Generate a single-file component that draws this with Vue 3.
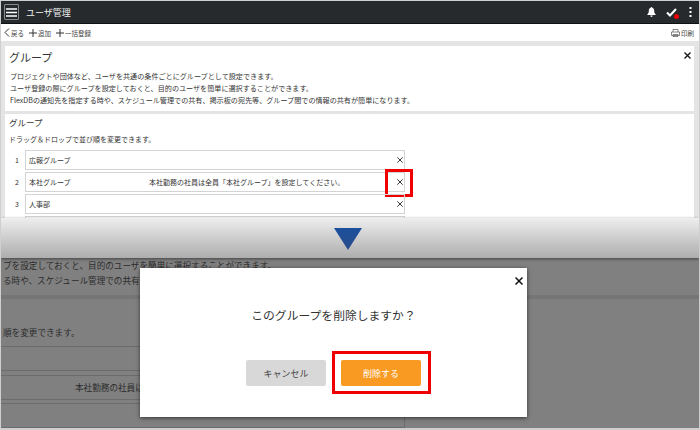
<template>
  <div class="page">
    <!-- before: group list -->
    <section class="top">
      <header class="appbar">
        <button class="menu">
          <svg width="11" height="9" viewBox="0 0 11 9"><path d="M0 1h11M0 4.500h11M0 8h11" stroke="#fff" stroke-width="1.500" /></svg>
        </button>
        <span class="app-title">ユーザ管理</span>
        <div class="appbar-icons">
          <svg width="9" height="10" viewBox="0 0 9 10"><path d="M4.500 0c.5 0 .8.3.8.8C6.800 1.200 7.200 2.500 7.200 4c0 1.800.6 2.600 1.500 3.400V8H.3v-.6C1.200 6.600 1.800 5.800 1.800 4c0-1.500.4-2.800 1.900-3.200 0-.5.3-.8.8-.8zM3.300 8.600h2.400C5.700 9.400 5.200 10 4.500 10S3.300 9.400 3.300 8.600z" fill="#fff" /></svg>
          <span class="check">
            <svg width="11" height="9" viewBox="0 0 11 9"><path d="M1 4.500l3 3L10 1" fill="none" stroke="#fff" stroke-width="2" /></svg>
            <i class="dot"></i>
          </span>
          <svg class="more" width="3" height="10" viewBox="0 0 3 10"><path d="M.5 0h2v2h-2zM.5 4h2v2h-2zM.5 8h2v2h-2z" fill="#fff" /></svg>
        </div>
      </header>

      <nav class="toolbar">
        <a class="tool">
          <svg width="6" height="9" viewBox="0 0 6 9"><path d="M5 .5L1 4.500l4 4" fill="none" stroke="#333" stroke-width="1" /></svg>
          戻る
        </a>
        <a class="tool">
          <svg width="8" height="8" viewBox="0 0 8 8"><path d="M4 0v8M0 4h8" stroke="#333" stroke-width="1" /></svg>
          追加
        </a>
        <a class="tool">
          <svg width="8" height="8" viewBox="0 0 8 8"><path d="M4 0v8M0 4h8" stroke="#333" stroke-width="1" /></svg>
          一括登録
        </a>
        <a class="tool print">
          <svg width="9" height="8" viewBox="0 0 9 8"><path d="M2 3V.5h5V3M.5 3h8v3.500H.5zM2 5.500h5v2H2z" fill="#fff" stroke="#666" stroke-width=".8" /></svg>
          印刷
        </a>
      </nav>

      <div class="card intro">
        <h1>グループ</h1>
        <svg class="close" width="7" height="7" viewBox="0 0 7 7"><path d="M.5.5l6 6M6.500.5l-6 6" stroke="#111" stroke-width="1.300" /></svg>
        <p v-for="line in introLines" :key="line">{{ line }}</p>
      </div>

      <div class="card list">
        <h2>グループ</h2>
        <p class="hint">ドラッグ＆ドロップで並び順を変更できます。</p>
        <div class="rows">
          <div v-for="(g, i) in groups" :key="i" class="row">
            <span class="num">{{ g.name ? i + 1 : '' }}</span>
            <div class="field">
              <span class="name">{{ g.name }}</span>
              <span class="note">{{ g.note }}</span>
              <svg class="x" width="6" height="6" viewBox="0 0 6 6"><path d="M.3.3l5.400 5.400M5.700.3L.3 5.700" stroke="#222" stroke-width=".9" /></svg>
              <i v-if="g.note" class="mark mark-x"></i>
            </div>
          </div>
        </div>
      </div>
    </section>

    <!-- arrow band -->
    <div class="band">
      <svg width="28" height="22" viewBox="0 0 28 22">
        <defs>
          <linearGradient id="tri" x1="0" y1="0" x2="0" y2="1">
            <stop offset="0" stop-color="#1b4f9c" />
            <stop offset="1" stop-color="#2b4e8a" />
          </linearGradient>
        </defs>
        <path d="M0 0h28L14 22z" fill="url(#tri)" />
      </svg>
    </div>

    <!-- after: confirm dialog -->
    <section class="bottom">
      <p class="dim-line">プを設定しておくと、目的のユーザを簡単に選択することができます。</p>
      <p class="dim-line">る時や、スケジュール管理での共有、掲示板の宛先等、グループ間での情報の共有が簡単になります。</p>
      <div class="dim-gap"></div>
      <p class="dim-line l3">順を変更できます。</p>
      <div class="dim-rows">
        <div class="dim-row"></div>
        <div class="dim-row"><span>本社勤務の社員は全員「本社グループ」を設定してください。</span></div>
        <div class="dim-row"></div>
      </div>

      <div class="modal">
        <svg class="modal-close" width="8" height="8" viewBox="0 0 8 8"><path d="M.5.5l7 7M7.500.5l-7 7" stroke="#111" stroke-width="1.500" /></svg>
        <p class="question">このグループを削除しますか？</p>
        <div class="actions">
          <button class="btn cancel">キャンセル</button>
          <button class="btn danger">削除する<i class="mark mark-del"></i></button>
        </div>
      </div>
    </section>
  </div>
</template>

<script setup>
const introLines = [
  'プロジェクトや団体など、ユーザを共通の条件ごとにグループとして設定できます。',
  'ユーザ登録の際にグループを設定しておくと、目的のユーザを簡単に選択することができます。',
  'FlexDBの通知先を指定する時や、スケジュール管理での共有、掲示板の宛先等、グループ間での情報の共有が簡単になります。'
]

const groups = [
  { name: '広報グループ', note: '' },
  { name: '本社グループ', note: '本社勤務の社員は全員「本社グループ」を設定してください。' },
  { name: '人事部', note: '' },
  { name: '', note: '' }
]
</script>

<style>
html, body {
  margin: 0;
  background: #fff;
}
</style>

<style scoped>
.page {
  width: 700px;
  height: 430px;
  box-sizing: border-box;
  border: 1px solid #cfcfcf;
  border-bottom-width: 2px;
  overflow: hidden;
  display: flex;
  flex-direction: column;
  font-family: "Noto Sans CJK JP", "Liberation Sans", sans-serif;
  color: #333;
}

p, h1, h2 {
  margin: 0;
  font-weight: 400;
}

/* top half */
.top {
  height: 217px;
  flex: none;
  overflow: hidden;
  background: #e4e4e4;
}

.appbar {
  height: 23px;
  background: #262a2c;
  display: flex;
  align-items: center;
  padding: 0 7px 0 3px;
  box-sizing: border-box;
  border-bottom: 1px solid #111;
}

.menu {
  width: 15px;
  height: 16px;
  padding: 0;
  display: flex;
  align-items: center;
  justify-content: center;
  background: transparent;
  border: 1px solid #888;
  border-radius: 1px;
}

.app-title {
  margin-left: 7px;
  font-size: 9px;
  color: #f0f0f0;
}

.appbar-icons {
  margin-left: auto;
  display: flex;
  align-items: center;
  gap: 10px;
}

.more {
  margin-left: 2px;
}

.check {
  position: relative;
  display: flex;
}

.dot {
  position: absolute;
  right: -2px;
  bottom: -2px;
  width: 5px;
  height: 5px;
  border-radius: 50%;
  background: #f00000;
}

.toolbar {
  height: 17px;
  background: #fff;
  display: flex;
  align-items: center;
  gap: 5px;
  padding: 0 5px 0 3px;
  font-size: 6.500px;
}

.tool {
  display: flex;
  align-items: center;
  gap: 1px;
  color: #444;
}

.print {
  margin-left: auto;
}

.card {
  background: #fff;
  margin: 0 5px 0 4px;
  padding: 0 4px;
  position: relative;
}

.intro {
  margin-top: 5px;
  height: 65px;
  box-sizing: border-box;
  padding-top: 3px;
}

.intro h1 {
  font-size: 11px;
  line-height: 16px;
  margin-bottom: 5px;
}

.intro p {
  font-size: 7.100px;
  line-height: 12px;
  padding-left: 1px;
  white-space: nowrap;
}

.close {
  position: absolute;
  right: 3px;
  top: 6px;
}

.list {
  margin-top: 3px;
  padding-top: 2px;
  height: 120px;
}

.list h2 {
  font-size: 8.500px;
  line-height: 13px;
  margin-bottom: 5px;
}

.hint {
  font-size: 7px;
  line-height: 11px;
  margin-bottom: 5px;
}

.rows {
  display: flex;
  flex-direction: column;
  gap: 2px;
}

.row {
  display: flex;
  align-items: center;
}

.num {
  width: 16px;
  text-align: center;
  font-size: 7px;
  flex: none;
}

.field {
  position: relative;
  width: 380px;
  height: 20px;
  box-sizing: border-box;
  border: 1px solid #d4d4d4;
  display: flex;
  align-items: center;
  padding: 0 3px;
  font-size: 7px;
}

.name {
  width: 120px;
  flex: none;
}

.x {
  margin-left: auto;
  margin-right: -2px;
}

/* red highlight boxes */
.mark {
  position: absolute;
  box-sizing: border-box;
  border: 3px solid #f00000;
  display: block;
}

.mark-x {
  right: -9px;
  top: -4px;
  width: 28px;
  height: 28px;
}

/* arrow band */
.band {
  height: 40px;
  flex: none;
  display: flex;
  justify-content: center;
  align-items: flex-start;
  padding-top: 10px;
  padding-right: 4px;
  box-sizing: border-box;
  background: linear-gradient(#eeeeee, #adadad);
  box-shadow: 0 1px 3px rgba(0, 0, 0, .5);
  position: relative;
  z-index: 1;
}

/* bottom half, dimmed */
.bottom {
  flex: 1;
  position: relative;
  background: #808080;
  overflow: hidden;
  color: #2b2b2b;
}

.dim-line {
  font-size: 8.600px;
  white-space: nowrap;
  line-height: 15px;
  padding-left: 2px;
}

.dim-gap {
  height: 4px;
  margin-top: 7px;
  background: #757575;
}

.l3 {
  margin-top: 26px;
  line-height: 14px;
}

.dim-rows {
  margin-top: 7px;
  width: 404px;
  display: flex;
  flex-direction: column;
  gap: 3.500px;
}

.dim-row {
  height: 25px;
  box-sizing: border-box;
  border: 1px solid #6c6c6c;
  border-left: none;
  font-size: 8.600px;
  line-height: 23px;
  padding-left: 74px;
  white-space: nowrap;
}

/* dialog */
.modal {
  position: absolute;
  left: 139px;
  top: 10px;
  width: 387px;
  height: 149px;
  background: #fff;
  box-shadow: 0 1px 4px rgba(0, 0, 0, .6);
  display: flex;
  flex-direction: column;
  align-items: center;
  color: #333;
}

.modal-close {
  position: absolute;
  right: 4px;
  top: 9px;
}

.question {
  margin-top: 38px;
  font-size: 11.800px;
  line-height: 18px;
}

.actions {
  margin-top: 36px;
  display: flex;
  gap: 15px;
}

.btn {
  position: relative;
  width: 80px;
  height: 26px;
  padding: 0;
  border: none;
  border-radius: 2px;
  font-family: inherit;
  font-size: 9px;
}

.cancel {
  background: #d8d8d8;
  color: #444;
}

.danger {
  background: #f99a22;
  color: #fff;
}

.mark-del {
  left: -9px;
  top: -9px;
  width: 99px;
  height: 43px;
}
</style>
